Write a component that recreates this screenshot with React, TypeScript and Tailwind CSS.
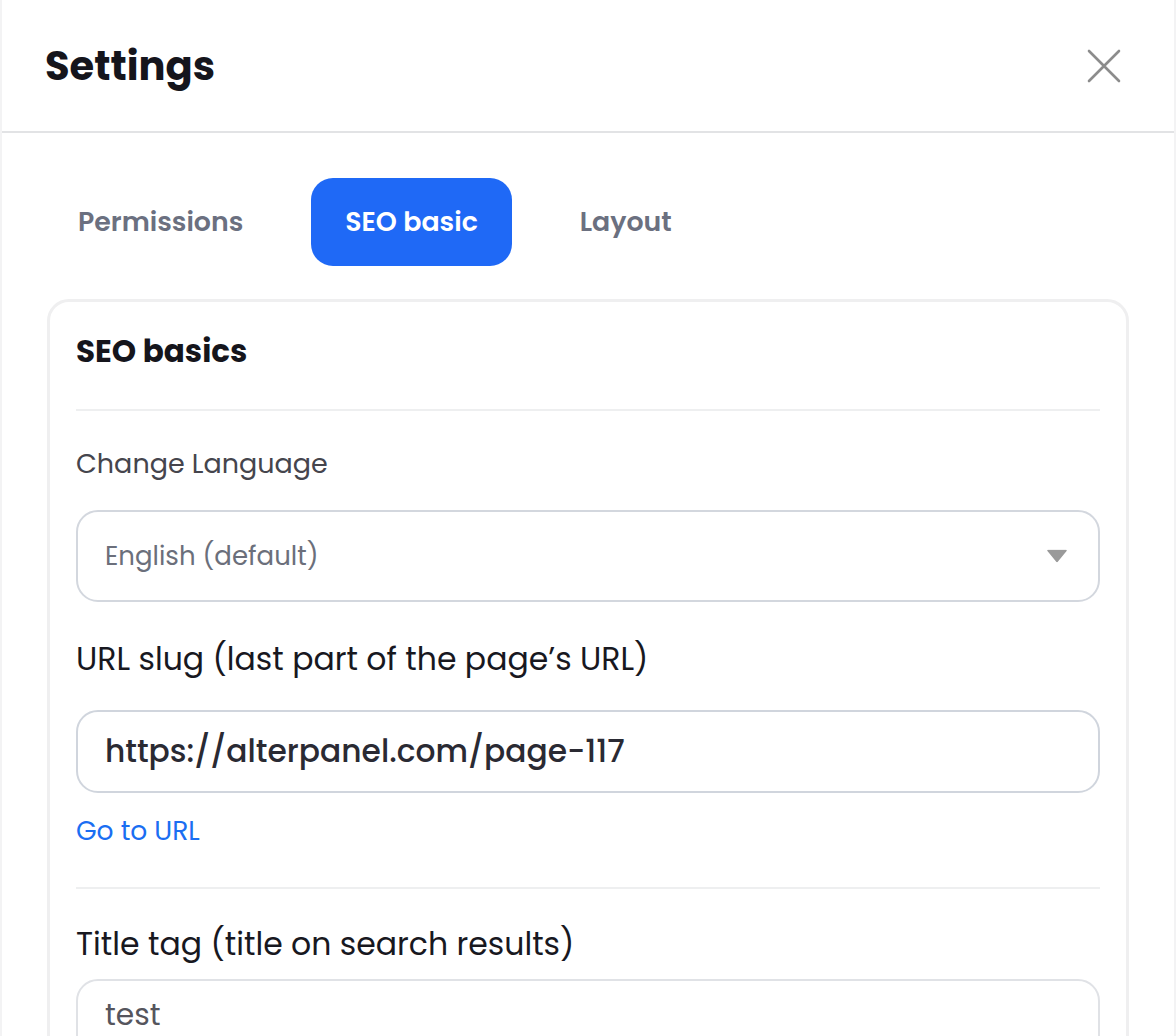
import { useState } from 'react';

const tabs = ['Permissions', 'SEO basic', 'Layout'];

export default function App() {
    const [activeTab, setActiveTab] = useState('SEO basic');
    const [slug, setSlug] = useState('https://alterpanel.com/page-117');
    const [title, setTitle] = useState('test');

    return (
        <div
            className="w-[1176px] h-[1036px] overflow-hidden bg-white"
            style={{ fontFamily: '"Poppins", "Inter", "Noto Sans", sans-serif' }}
        >
            <div className="h-full border-x-2 border-[#f3f3f4] bg-white">
                {/* header */}
                <div className="flex items-center justify-between h-[133px] border-b-2 border-[#e2e3e5] pl-[43px] pr-[52px]">
                    <h1 className="text-[40px] leading-[48px] font-bold text-[#15151c]">Settings</h1>
                    <button className="text-[#8c8c8c]" aria-label="Close">
                        <svg width="36" height="36" viewBox="0 0 36 36" fill="none">
                            <path d="M3 3L33 33M33 3L3 33" stroke="currentColor" strokeWidth="2.6" strokeLinecap="round" />
                        </svg>
                    </button>
                </div>

                <div className="px-[45px] pt-[45px]">
                    {/* tabs */}
                    <div className="flex gap-[34px] -ml-[3px]">
                        {tabs.map(tab => (
                            <button
                                key={tab}
                                onClick={() => setActiveTab(tab)}
                                className={
                                    tab === activeTab
                                        ? 'h-[88px] px-[34px] rounded-[22px] bg-[#1f69f6] text-white text-[26.8px] font-semibold'
                                        : 'h-[88px] px-[34px] rounded-[22px] text-[#6b7080] text-[26.8px] font-semibold'
                                }
                            >
                                {tab}
                            </button>
                        ))}
                    </div>

                    {/* card */}
                    <div className="mt-[33px] border-[3px] border-[#efeff0] rounded-[22px] px-[26px] pt-[29px] pb-10">
                        <h2 className="text-[31px] leading-[40px] font-bold text-[#15151c] pb-[38px] border-b-2 border-[#eeeff0]">SEO basics</h2>

                        <label className="block mt-[35px] text-[27px] leading-[36px] text-[#45454d]">Change Language</label>
                        <div className="relative mt-[28px]">
                            <select className="w-full h-[92px] appearance-none rounded-[22px] border-2 border-[#d3d7de] bg-white pl-[27px] pr-16 text-[26px] text-[#6b6f7b] outline-none">
                                <option>English (default)</option>
                            </select>
                            <svg className="absolute right-[33px] top-1/2 -translate-y-1/2 pointer-events-none" width="20" height="13" viewBox="0 0 20 13">
                                <path d="M1 1H19L10 12Z" fill="#9a9a9a" stroke="#9a9a9a" strokeWidth="1.5" strokeLinejoin="round" />
                            </svg>
                        </div>

                        <label className="block mt-[35px] text-[31.5px] leading-[44px] text-[#18181f]">URL slug (last part of the page’s URL)</label>
                        <input
                            value={slug}
                            onChange={e => setSlug(e.target.value)}
                            className="mt-[29px] w-full h-[83px] rounded-[22px] border-2 border-[#d0d5dd] px-[27px] text-[31.3px] font-medium text-[#2a2a33] outline-none"
                        />
                        <a href="#" className="block mt-[20px] text-[26.5px] leading-[36px] text-[#1a6ef2]">Go to URL</a>

                        <div className="mt-[38px] border-b-2 border-[#eeeff0]" />

                        <label className="block mt-[33px] text-[31.5px] leading-[44px] text-[#18181f]">Title tag (title on search results)</label>
                        <input
                            value={title}
                            onChange={e => setTitle(e.target.value)}
                            className="mt-[13px] w-full h-[83px] rounded-[22px] border-2 border-[#e0e2e6] px-[27px] pb-[12px] text-[29.7px] text-[#55555d] outline-none"
                        />
                    </div>
                </div>
            </div>
        </div>
    );
}
